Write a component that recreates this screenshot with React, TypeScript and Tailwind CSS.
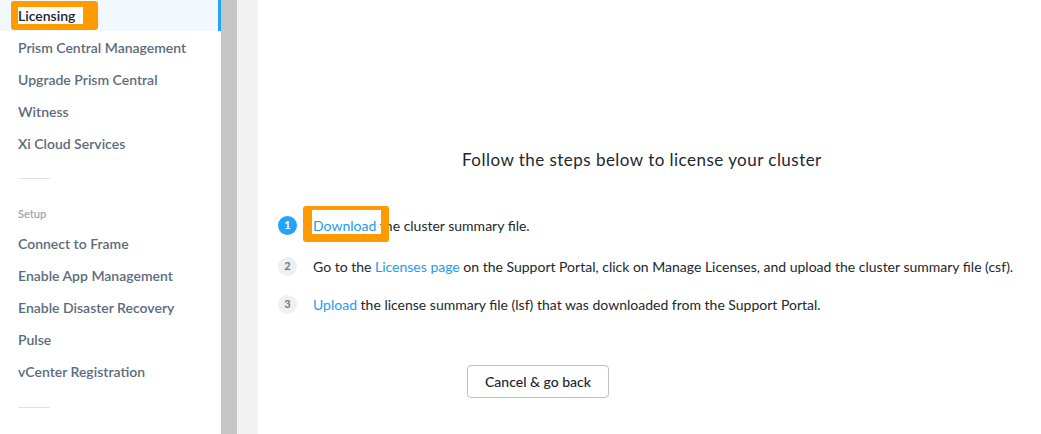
import React from "react";

const font = { fontFamily: "Lato, 'Open Sans', Arial, sans-serif" };

function NavItem({ label }: { label: string }) {
  return (
    <div className="h-8 flex items-center pl-[18px] text-[14px] font-semibold text-[#5b6b7e]">
      {label}
    </div>
  );
}

function Step({ n, active, children }: { n: number; active?: boolean; children: React.ReactNode }) {
  return (
    <div className="h-5 flex items-center gap-4 text-[14px] text-[#22272e]">
      <span
        className={
          active
            ? "w-[19px] h-[19px] rounded-full bg-[#22a5f7] text-white text-[11px] font-bold flex items-center justify-center shrink-0"
            : "w-[19px] h-[19px] rounded-full bg-[#eef0f3] text-[#6b7888] text-[11px] font-bold flex items-center justify-center shrink-0"
        }
      >
        {n}
      </span>
      <span className="relative">{children}</span>
    </div>
  );
}

export default function App() {
  return (
    <div className="w-[1041px] h-[434px] flex overflow-hidden bg-white" style={font}>
      {/* sidebar */}
      <div className="w-[221px] shrink-0 flex flex-col">
        <div className="h-[31px] bg-[#f1f9fe] border-r-[3px] border-[#22a5f7] flex items-center pl-[11px]">
          <span className="h-[29px] bg-[#ff9a00] rounded-[3px] flex items-center px-[7px] pr-[15px]">
            <span className="bg-white text-[14px] font-semibold text-[#1a2330] leading-[17px] pr-[8px]">Licensing</span>
          </span>
        </div>
        <div>
          <NavItem label="Prism Central Management" />
          <NavItem label="Upgrade Prism Central" />
          <NavItem label="Witness" />
          <NavItem label="Xi Cloud Services" />
        </div>
        <div className="ml-[18px] mt-[19px] w-8 h-px bg-[#dde2e8]" />
        <div className="pl-[18px] mt-[27px] text-[11px] font-semibold text-[#9aa6b4]">Setup</div>
        <div className="mt-[5px]">
          <NavItem label="Connect to Frame" />
          <NavItem label="Enable App Management" />
          <NavItem label="Enable Disaster Recovery" />
          <NavItem label="Pulse" />
          <NavItem label="vCenter Registration" />
        </div>
        <div className="ml-[18px] mt-[19px] w-8 h-px bg-[#dde2e8]" />
      </div>
      {/* scrollbar */}
      <div className="w-4 shrink-0 bg-[#c6c6c6]" />
      <div className="w-[21px] shrink-0 bg-[#f2f2f3]" />
      {/* content */}
      <div className="flex-1 flex flex-col pt-[150px] pl-[20px]">
        <div className="h-5 leading-5 pl-[184px] text-[17px] tracking-[0.47px] text-[#22272e]">
          Follow the steps below to license your cluster
        </div>
        <div className="mt-[45px] flex flex-col">
          <Step n={1} active>
            <span className="text-[#1b9cf2]">Download</span> the cluster summary file.
            {/* highlight frame */}
            <span className="absolute -left-[10px] -top-[9px] w-[86px] h-[36px] rounded-[3px] border-l-[9px] border-r-[8px] border-t-[4px] border-b-[8px] border-[#ff9a00]" />
          </Step>
          <div className="mt-[21px]">
            <Step n={2}>
              Go to the <span className="text-[#1b9cf2]">Licenses page</span> on the Support Portal, click on Manage
              Licenses, and upload the cluster summary file (csf).
            </Step>
          </div>
          <div className="mt-[18px]">
            <Step n={3}>
              <span className="text-[#1b9cf2]">Upload</span> the license summary file (lsf) that was downloaded from
              the Support Portal.
            </Step>
          </div>
        </div>
        <div className="mt-[51px] pl-[189px]">
          <button className="w-[142px] h-[33px] border border-[#b9c0c9] rounded-[4px] bg-white text-[14px] font-medium text-[#1a2330]">
            Cancel &amp; go back
          </button>
        </div>
      </div>
    </div>
  );
}
